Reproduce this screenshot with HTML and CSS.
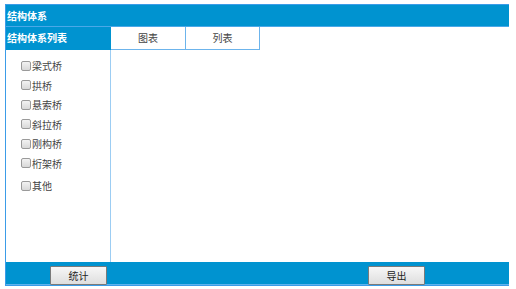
FILE: index.html
```html
<!DOCTYPE html>
<html>
<head>
<meta charset="utf-8">
<link rel="stylesheet" href="styles.css">
</head>
<body>
<div class="frame">
  <div class="title">结构体系</div>
  <div class="row2">
    <div class="listhead">结构体系列表</div>
    <div class="tabs">
      <div class="tab">图表</div>
      <div class="tab">列表</div>
    </div>
  </div>
  <div class="main">
    <div class="side">
      <label class="item"><span class="cb"></span>梁式桥</label>
      <label class="item"><span class="cb"></span>拱桥</label>
      <label class="item"><span class="cb"></span>悬索桥</label>
      <label class="item"><span class="cb"></span>斜拉桥</label>
      <label class="item"><span class="cb"></span>刚构桥</label>
      <label class="item"><span class="cb"></span>桁架桥</label>
      <label class="item last"><span class="cb"></span>其他</label>
    </div>
    <div class="content"></div>
  </div>
  <div class="footer">
    <div class="fleft"><button class="btn">统计</button></div>
    <div class="fright"><button class="btn">导出</button></div>
  </div>
</div>
</body>
</html>
```
FILE: styles.css
```css
* { box-sizing: border-box; }
body {
  margin: 0;
  background: #fff;
  font-family: "Noto Sans CJK SC", "Noto Sans", sans-serif;
}
.frame {
  margin: 4px 0 0 5px;
  width: 504px;
  height: 282px;
  border: 1px solid #3b9ce8;
  border-right: none;
  display: flex;
  flex-direction: column;
}
.title {
  height: 22px;
  background: #0093d0;
  color: #fff;
  font-size: 10px;
  font-weight: bold;
  line-height: 22px;
  padding-left: 1px;
  border-bottom: 1px solid #4aa8e8;
}
.row2 {
  display: flex;
  height: 23px;
}
.listhead {
  width: 105px;
  background: #0093d0;
  color: #fff;
  font-size: 10px;
  font-weight: bold;
  line-height: 22px;
  padding-left: 1px;
}
.tabs {
  display: flex;
  height: 23px;
  border-bottom: 1px solid #6cb4ec;
}
.tab {
  width: 75px;
  border-right: 1px solid #6cb4ec;
  font-size: 10px;
  color: #444;
  text-align: center;
  line-height: 22px;
}
.tab:last-child { width: 74px; }
.main {
  flex: 1;
  display: flex;
}
.side {
  width: 105px;
  border-right: 1px solid #9ccdf3;
  padding: 6px 0 0 15px;
}
.item {
  display: flex;
  align-items: center;
  height: 19.5px;
  font-size: 10px;
  color: #444;
}
.item.last { margin-top: 3px; }
.cb {
  width: 10px;
  height: 10px;
  margin-right: 1px;
  border: 1px solid #9a9a9a;
  border-radius: 2px;
  background: linear-gradient(#f2f2f2, #d8d8d8);
}
.content { flex: 1; }
.footer {
  height: 23px;
  background: #0093d0;
  display: flex;
  align-items: center;
  border-bottom: 1px solid #5fb3ee;
}
.fleft {
  width: 362px;
  padding-left: 44px;
}
.btn {
  width: 57px;
  height: 19px;
  padding: 0;
  font-family: "Noto Sans CJK SC", sans-serif;
  font-size: 10px;
  color: #222;
  border: 1px solid #7a7a7a;
  border-radius: 1px;
  background: linear-gradient(#f7f7f7, #dedede);
}
.fright .btn { width: 57px; }
```
